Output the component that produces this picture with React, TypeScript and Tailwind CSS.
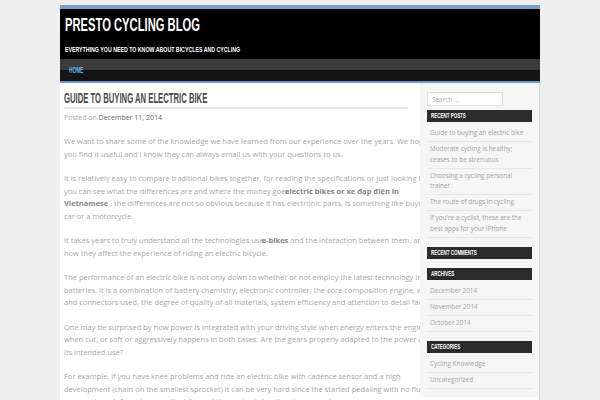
const narrow = "font-['Liberation_Sans_Narrow','Liberation_Sans',sans-serif]";

const recentPosts = [
  "Guide to buying an electric bike",
  "Moderate cycling is healthy; ceases to be strenuous",
  "Choosing a cycling personal trainer",
  "The route of drugs in cycling",
  "If you're a cyclist, these are the best apps for your iPhone",
];

const archives = ["December 2014", "November 2014", "October 2014"];
const categories = ["Cycling Knowledge", "Uncategorized"];

function WidgetTitle({ children }: { children: string }) {
  return (
    <div className="h-[12px] bg-[#2b2b2b] pl-[4px] flex items-center">
      <span className={`${narrow} block origin-left scale-x-[0.56] whitespace-nowrap text-[8px] leading-[8px] font-bold uppercase text-white`}>
        {children}
      </span>
    </div>
  );
}

function WidgetList({ items }: { items: string[] }) {
  return (
    <ul className="mt-[4px]">
      {items.map((item) => (
        <li
          key={item}
          className="border-b border-[#e6e6e6] py-[2.25px] pl-[3px] text-[6.4px] leading-[10.5px] text-[#a3a3a3]"
        >
          {item}
        </li>
      ))}
    </ul>
  );
}

export default function App() {
  return (
    <div className="min-h-screen bg-[#efefef] pt-[5px] font-['Open_Sans',sans-serif]">
      <div className="mx-auto w-[480px]">
        {/* header */}
        <div className="border-t-4 border-[#7aa0cc] bg-black h-[54px] pl-[5px] pt-[6px]">
          <div className={`${narrow} block origin-left scale-x-[0.59] whitespace-nowrap text-[19px] leading-[19px] font-bold text-white`}>
            PRESTO CYCLING BLOG
          </div>
          <div className={`${narrow} mt-[12px] block origin-left scale-x-[0.75] whitespace-nowrap text-[7px] leading-[7px] font-bold text-white`}>
            EVERYTHING YOU NEED TO KNOW ABOUT BICYCLES AND CYCLING
          </div>
        </div>
        <nav className="h-[24px] border-b-2 border-[#6c98cc] bg-[linear-gradient(to_bottom,#3c3c3c_50%,#141414_50%)] pl-[9px] flex items-center">
          <span className={`${narrow} block origin-left scale-x-[0.56] text-[8.5px] leading-[9px] font-bold text-[#5fb4e6]`}>
            HOME
          </span>
        </nav>

        {/* body */}
        <div className="flex bg-white border-r border-[#d2d2d2]">
          <main className="w-[360px] shrink-0 pl-[4px] pr-[12px] pt-[8px]">
            <h1 className={`${narrow} block origin-left scale-x-[0.55] whitespace-nowrap text-[14px] leading-[14px] font-bold text-[#4a4a4a]`}>
              GUIDE TO BUYING AN ELECTRIC BIKE
            </h1>
            <div className="mt-[2px] h-[2px] bg-[#e8e8e8]" />
            <div className="mt-[4px] text-[7px] leading-[10px] text-[#aaaaaa]">
              Posted on <span className="text-[#666]">December 11, 2014</span>
            </div>

            <div className="mt-[12px] w-[377px] text-[7.5px] leading-[12.5px] text-[#a8a8a8]">
              <p className="mb-[12px]">
                We want to share some of the knowledge we have learned from our experience over the years. We hope
                you find it useful and I know they can always email us with your questions to us.
              </p>
              <p className="mb-[12px]">
                It is relatively easy to compare traditional bikes together, for reading the specifications or just looking bikes
                you can see what the differences are and where the money goes
                <b className="-ml-[4px] text-[#858585]">electric bikes or xe đạp điện in Vietnamese</b> , the
                differences are not so obvious because it has electronic parts. Is something like buying a car or a motorcycle.
              </p>
              <p className="mb-[12px]">
                It takes years to truly understand all the technologies use<b className="-ml-[2px] text-[#858585]">e-bikes</b> and
                the interaction between them, and how they affect the experience of riding an electric bicycle.
              </p>
              <p className="mb-[12px]">
                The performance of an electric bike is not only down to whether or not employ the latest technology in
                batteries. It is a combination of battery chemistry, electronic controller, the core composition engine, wiring
                and connectors used, the degree of quality of all materials, system efficiency and attention to detail factory.
              </p>
              <p className="mb-[12px]">
                One may be surprised by how power is integrated with your driving style when energy enters the engine,
                when cut, or soft or aggressively happens in both cases. Are the gears properly adapted to the power and
                its intended use?
              </p>
              <p className="mb-[12px]">
                For example, if you have knee problems and ride an electric bike with cadence sensor and a high
                development (chain on the smallest sprocket) it can be very hard since the started pedaling with no fluidity,
                you need much force to move the bike and the engine takes time to respond.
              </p>
            </div>
          </main>

          {/* sidebar */}
          <aside className="relative w-[119px] shrink-0 self-start rounded-b-sm bg-[#f6f6f6] px-[7px] pt-[9px] pb-[8px]">
            <input
              type="text"
              placeholder="Search ..."
              className="block h-[14px] w-[76px] border border-[#dedede] bg-white px-[4px] text-[6.4px] text-[#999] placeholder:text-[#b0b0b0] outline-none"
            />
            <div className="mt-[4px]">
              <WidgetTitle>Recent Posts</WidgetTitle>
              <WidgetList items={recentPosts} />
            </div>
            <div className="mt-[9px]">
              <WidgetTitle>Recent Comments</WidgetTitle>
            </div>
            <div className="mt-[9px]">
              <WidgetTitle>Archives</WidgetTitle>
              <WidgetList items={archives} />
            </div>
            <div className="mt-[9px]">
              <WidgetTitle>Categories</WidgetTitle>
              <WidgetList items={categories} />
            </div>
          </aside>
        </div>
      </div>
    </div>
  );
}
